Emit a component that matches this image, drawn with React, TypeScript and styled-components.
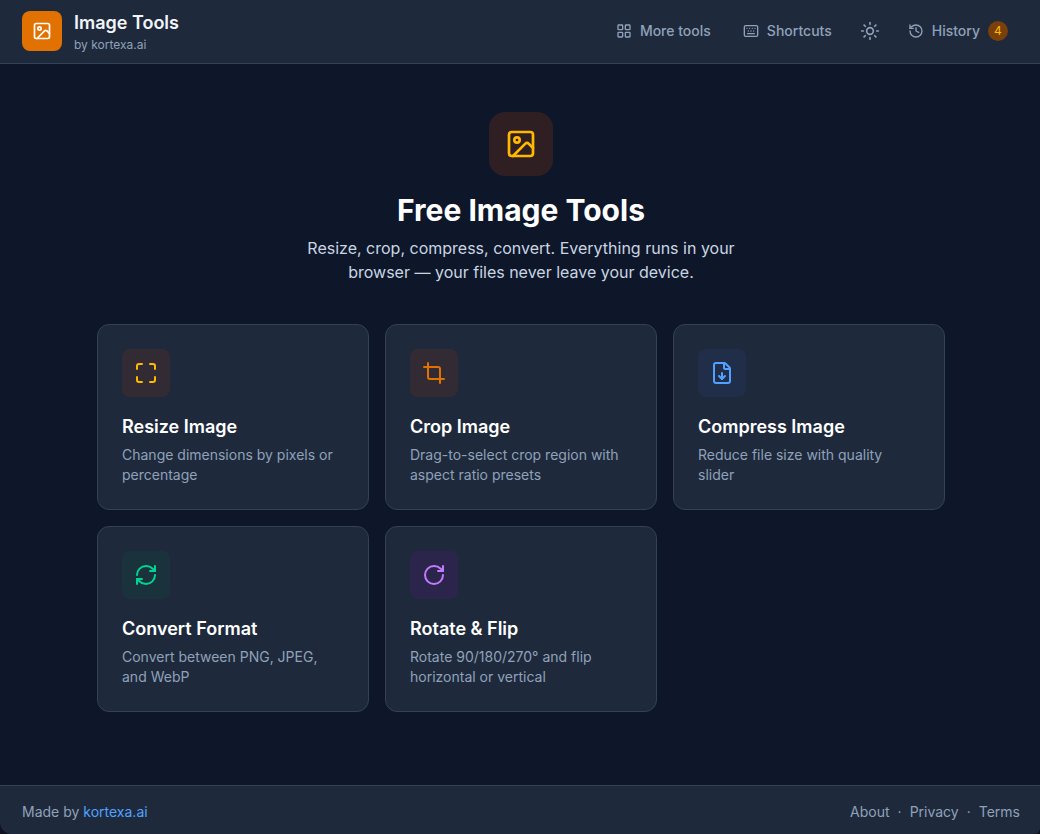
import React from "react";
import styled, { createGlobalStyle } from "styled-components";
import {
  Crop,
  FileDown,
  History,
  Image as ImageIcon,
  Keyboard,
  LayoutGrid,
  Maximize,
  RefreshCw,
  RotateCw,
  Sun,
  type LucideIcon,
} from "lucide-react";

const GlobalStyle = createGlobalStyle`
  *, *::before, *::after { box-sizing: border-box; }
  body {
    margin: 0;
    background: #10131f;
    color: #ffffff;
    font-family: Inter, "Liberation Sans", sans-serif;
    -webkit-font-smoothing: antialiased;
  }
  h1, h2, p { margin: 0; }
  a { color: inherit; text-decoration: none; }
`;

const Page = styled.div`
  min-height: 100vh;
  display: flex;
  flex-direction: column;
  background: #0e172a;
  border-radius: 0 0 6px 12px;
  overflow: hidden;
`;

const Header = styled.header`
  display: flex;
  align-items: center;
  justify-content: space-between;
  padding: 9px 20px 10px 22px;
  background: #1e2a3c;
  border-bottom: 1px solid #314158;
`;

const Brand = styled.a`
  display: flex;
  align-items: center;
  gap: 12px;
`;

const Logo = styled.span`
  display: grid;
  place-items: center;
  width: 40px;
  height: 40px;
  border-radius: 8px;
  background: #e17100;
`;

const BrandText = styled.span`
  display: flex;
  flex-direction: column;
`;

const BrandName = styled.span`
  font-size: 18px;
  line-height: 28px;
  font-weight: 600;
  color: #f1f5f9;
`;

const BrandOwner = styled.span`
  font-size: 12px;
  line-height: 16px;
  color: #90a1b9;
`;

const Nav = styled.nav`
  display: flex;
  align-items: center;
  gap: 8px;
`;

const NavButton = styled.button<{ $iconOnly?: boolean }>`
  display: flex;
  align-items: center;
  gap: 8px;
  padding: ${(p) => (p.$iconOnly ? "8px" : "8px 12px")};
  border: 0;
  border-radius: 8px;
  background: transparent;
  color: #90a1b9;
  font: 500 14px/20px Inter, "Liberation Sans", sans-serif;
  cursor: pointer;
`;

const Badge = styled.span`
  display: grid;
  place-items: center;
  width: 20px;
  height: 20px;
  border-radius: 50%;
  background: #7b3f0a;
  color: #ffb900;
  font-size: 12px;
  line-height: 16px;
  font-weight: 400;
`;

const Main = styled.main`
  flex: 1;
  padding: 48px 22px 48px 24px;
`;

const Hero = styled.section`
  display: flex;
  flex-direction: column;
  align-items: center;
  text-align: center;
  margin-bottom: 40px;
`;

const HeroIcon = styled.div`
  display: grid;
  place-items: center;
  width: 64px;
  height: 64px;
  margin-bottom: 16px;
  border-radius: 16px;
  background: #301f22;
  color: #ffb900;
`;

const HeroTitle = styled.h1`
  font-size: 30px;
  line-height: 36px;
  font-weight: 700;
  margin-bottom: 8px;
`;

const HeroText = styled.p`
  max-width: 448px;
  font-size: 16px;
  line-height: 24px;
  color: #cad5e2;
`;

const Grid = styled.section`
  display: grid;
  grid-template-columns: repeat(3, minmax(0, 1fr));
  gap: 16px;
  max-width: 848px;
  margin: 0 auto;

  @media (max-width: 760px) {
    grid-template-columns: repeat(2, minmax(0, 1fr));
  }
`;

const Card = styled.a`
  padding: 24px;
  border: 1px solid #314158;
  border-radius: 12px;
  background: #1e2a3c;
`;

const CardIcon = styled.div<{ $color: string; $tint: string }>`
  display: grid;
  place-items: center;
  width: 48px;
  height: 48px;
  margin-bottom: 16px;
  border-radius: 8px;
  color: ${(p) => p.$color};
  background: ${(p) => p.$tint};
`;

const CardTitle = styled.h2`
  font-size: 18px;
  line-height: 28px;
  font-weight: 600;
  margin-bottom: 4px;
`;

const CardText = styled.p`
  font-size: 14px;
  line-height: 20px;
  color: #90a1b9;
`;

const Footer = styled.footer`
  display: flex;
  justify-content: space-between;
  padding: 16px 20px 12px 22px;
  background: #1e2a3c;
  border-top: 1px solid #314158;
  color: #90a1b9;
  font-size: 14px;
  line-height: 20px;
`;

const AccentLink = styled.a`
  color: #51a2ff;
`;

const FooterLinks = styled.div`
  display: flex;
  gap: 8px;
`;

interface Tool {
  icon: LucideIcon;
  title: string;
  text: string;
  color: string;
  tint: string;
}

const tools: Tool[] = [
  { icon: Maximize, title: "Resize Image", text: "Change dimensions by pixels or percentage", color: "#ffb900", tint: "#322b33" },
  { icon: Crop, title: "Crop Image", text: "Drag-to-select crop region with aspect ratio presets", color: "#e17100", tint: "#322b33" },
  { icon: FileDown, title: "Compress Image", text: "Reduce file size with quality slider", color: "#51a2ff", tint: "#202e4a" },
  { icon: RefreshCw, title: "Convert Format", text: "Convert between PNG, JPEG, and WebP", color: "#00d492", tint: "#1a323c" },
  { icon: RotateCw, title: "Rotate & Flip", text: "Rotate 90/180/270° and flip horizontal or vertical", color: "#c27aff", tint: "#2c254b" },
];

export default function App() {
  return (
    <>
      <GlobalStyle />
      <Page>
        <Header>
          <Brand href="#">
            <Logo>
              <ImageIcon size={20} color="#ffffff" />
            </Logo>
            <BrandText>
              <BrandName>Image Tools</BrandName>
              <BrandOwner>by kortexa.ai</BrandOwner>
            </BrandText>
          </Brand>
          <Nav>
            <NavButton type="button">
              <LayoutGrid size={16} />
              More tools
            </NavButton>
            <NavButton type="button">
              <Keyboard size={16} />
              Shortcuts
            </NavButton>
            <NavButton type="button" $iconOnly aria-label="Toggle theme">
              <Sun size={20} />
            </NavButton>
            <NavButton type="button">
              <History size={16} />
              History
              <Badge>4</Badge>
            </NavButton>
          </Nav>
        </Header>
        <Main>
          <Hero>
            <HeroIcon>
              <ImageIcon size={32} />
            </HeroIcon>
            <HeroTitle>Free Image Tools</HeroTitle>
            <HeroText>
              Resize, crop, compress, convert. Everything runs in your browser — your files never leave your device.
            </HeroText>
          </Hero>
          <Grid>
            {tools.map(({ icon: Icon, title, text, color, tint }) => (
              <Card href="#" key={title}>
                <CardIcon $color={color} $tint={tint}>
                  <Icon size={24} />
                </CardIcon>
                <CardTitle>{title}</CardTitle>
                <CardText>{text}</CardText>
              </Card>
            ))}
          </Grid>
        </Main>
        <Footer>
          <span>
            Made by <AccentLink href="#">kortexa.ai</AccentLink>
          </span>
          <FooterLinks>
            <a href="#">About</a>
            <span>·</span>
            <a href="#">Privacy</a>
            <span>·</span>
            <a href="#">Terms</a>
          </FooterLinks>
        </Footer>
      </Page>
    </>
  );
}
